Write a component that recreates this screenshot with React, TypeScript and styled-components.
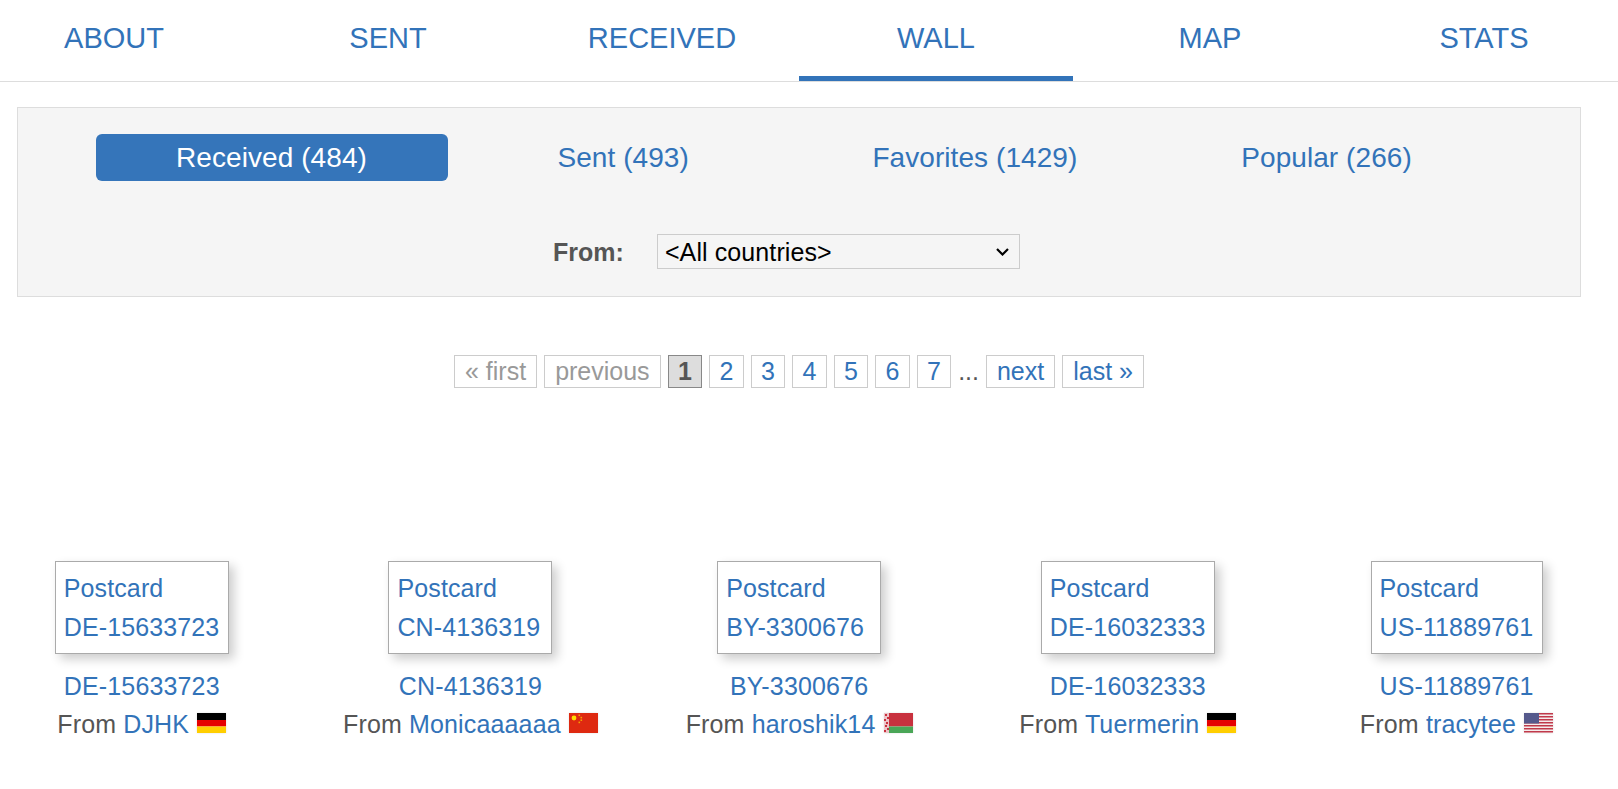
import { ReactNode } from 'react'
import styled, { createGlobalStyle } from 'styled-components'

const BLUE = '#3273b9'

const GlobalStyle = createGlobalStyle`
  html, body {
    margin: 0;
    padding: 0;
    background: #fff;
    overflow: hidden;
  }

  body {
    font-family: "Liberation Sans", Arial, sans-serif;
    font-size: 25px;
    color: #555;
  }

  a {
    color: ${BLUE};
    text-decoration: none;
  }
`

const Page = styled.div`
  width: 1618px;
  height: 789px;
  overflow: hidden;
`

const TabBarWrap = styled.nav`
  border-bottom: 1px solid #ddd;
`

const TabBar = styled.div`
  display: flex;
  margin-left: -23px;
  width: 1644px;
`

const Tab = styled.a<{ $active?: boolean }>`
  flex: 0 0 274px;
  height: 76px;
  border-bottom: 5px solid ${(p) => (p.$active ? BLUE : 'transparent')};
  display: flex;
  align-items: center;
  justify-content: center;
  font-size: 29px;
`

const FilterPanel = styled.section`
  margin: 25px 37px 0 17px;
  height: 190px;
  box-sizing: border-box;
  background: #f5f5f5;
  border: 1px solid #ddd;
  padding: 26px 77.5px;
`

const FilterTabs = styled.div`
  display: grid;
  grid-template-columns: repeat(4, 351.7px);
`

const FilterTab = styled.a<{ $active?: boolean }>`
  height: 47px;
  box-sizing: border-box;
  width: 352px;
  display: flex;
  align-items: center;
  justify-content: center;
  font-size: 28px;
  letter-spacing: 0.07px;
  border-radius: 6px;
  background: ${(p) => (p.$active ? '#3575ba' : 'transparent')};
  color: ${(p) => (p.$active ? '#fff' : BLUE)};
`

const CountryRow = styled.div`
  margin-top: 53px;
  display: flex;
  align-items: center;
  justify-content: center;
  gap: 33px;
  padding-right: 25px;
`

const CountryLabel = styled.label`
  font-weight: 700;
  color: #555;
  padding-top: 1px;
`

const SelectWrap = styled.div`
  position: relative;
  width: 363px;
  height: 35px;
`

const CountrySelect = styled.select`
  appearance: none;
  display: block;
  width: 100%;
  height: 100%;
  box-sizing: border-box;
  padding: 0 30px 0 7px;
  font-family: "Liberation Sans", Arial, sans-serif;
  font-size: 25px;
  letter-spacing: 0.1px;
  color: #000;
  background: #f5f5f5;
  border: 1px solid #ccc;
  border-radius: 0;
`

const SelectArrow = styled.svg`
  position: absolute;
  right: 11px;
  top: 14px;
  width: 13px;
  height: 8px;
  pointer-events: none;
`

const Pagination = styled.div`
  margin-top: 58px;
  padding-right: 20px;
  display: flex;
  justify-content: center;
  align-items: center;
  gap: 7px;
`

const PageItem = styled.a<{ $state?: 'current' | 'disabled'; $digit?: boolean }>`
  height: 33px;
  box-sizing: border-box;
  line-height: 30px;
  padding: 0 ${(p) => (p.$digit ? '9.3px' : '10px')};
  border: 1px solid ${(p) => (p.$state === 'current' ? '#888' : '#ccc')};
  background: ${(p) => (p.$state === 'current' ? '#ddd' : '#fff')};
  font-weight: ${(p) => (p.$state === 'current' ? 700 : 400)};
  color: ${(p) =>
    p.$state === 'current' ? '#555' : p.$state === 'disabled' ? '#999' : BLUE};
`

const Ellipsis = styled.span`
  color: #555;
`

const Gallery = styled.div`
  margin: 173px 0 0 -22.6px;
  width: 1645px;
  display: grid;
  grid-template-columns: repeat(5, 328.7px);
`

const Item = styled.div`
  display: flex;
  flex-direction: column;
  align-items: center;
`

const Card = styled.a<{ $width: number }>`
  width: ${(p) => p.$width}px;
  height: 93px;
  box-sizing: border-box;
  padding: 6.5px 8px;
  border: 1px solid #aaa;
  background: #fff;
  box-shadow: 5px 5px 10px rgba(0, 0, 0, 0.2);
  line-height: 39px;
  letter-spacing: 0.12px;
`

const Caption = styled.div`
  margin-top: 13px;
  text-align: center;
  line-height: 38px;
  white-space: nowrap;
  letter-spacing: 0.15px;
`

const FlagBox = styled.svg`
  display: inline-block;
  width: 29px;
  height: 20px;
  vertical-align: 0;
  margin-left: 1px;
  box-shadow: 0 0 2px rgba(0, 0, 0, 0.12);
`

const Flag = ({ children }: { children: ReactNode }) => (
  <FlagBox viewBox="0 0 29 20" preserveAspectRatio="none">
    {children}
  </FlagBox>
)

const FlagDE = () => (
  <Flag>
    <rect width="29" height="7" fill="#000" />
    <rect y="7" width="29" height="6.5" fill="#e60000" />
    <rect y="13.5" width="29" height="6.5" fill="#ffce00" />
  </Flag>
)

const FlagCN = () => (
  <Flag>
    <rect width="29" height="20" fill="#de2910" />
    <circle cx="5" cy="5" r="2.4" fill="#ffde00" />
    <rect x="9.5" y="1.5" width="1.6" height="1.6" fill="#f5a000" />
    <rect x="11.5" y="3.8" width="1.6" height="1.6" fill="#f5a000" />
    <rect x="11.5" y="6.4" width="1.6" height="1.6" fill="#f5a000" />
    <rect x="9.5" y="8.6" width="1.6" height="1.6" fill="#f5a000" />
  </Flag>
)

const FlagBY = () => (
  <Flag>
    <rect width="29" height="13.5" fill="#c8313e" />
    <rect y="13.5" width="29" height="6.5" fill="#4aa657" />
    <rect width="5" height="20" fill="#ecc4c8" />
    <path d="M1 1h2v2H1zM3 4h2v2H3zM0 6h2v2H0zM2 9h2v2H2zM1 12h2v2H1zM3 15h2v2H3zM0 17h2v2H0z" fill="#c8313e" />
  </Flag>
)

const FlagUS = () => (
  <Flag>
    <rect width="29" height="20" fill="#f4ecec" />
    {[0, 3, 6, 9, 12, 15, 18].map((y) => (
      <rect key={y} y={y} width="29" height="1.5" fill="#c0394a" />
    ))}
    <rect width="15" height="10.5" fill="#55598c" />
  </Flag>
)

const tabs = ['ABOUT', 'SENT', 'RECEIVED', 'WALL', 'MAP', 'STATS']

const filters = ['Received (484)', 'Sent (493)', 'Favorites (1429)', 'Popular (266)']

const pages = ['2', '3', '4', '5', '6', '7']

const postcards = [
  { id: 'DE-15633723', user: 'DJHK', width: 174, flag: <FlagDE /> },
  { id: 'CN-4136319', user: 'Monicaaaaaa', width: 164, flag: <FlagCN /> },
  { id: 'BY-3300676', user: 'haroshik14', width: 164, flag: <FlagBY /> },
  { id: 'DE-16032333', user: 'Tuermerin', width: 174, flag: <FlagDE /> },
  { id: 'US-11889761', user: 'tracytee', width: 172, flag: <FlagUS /> },
]

const App = () => (
  <Page>
    <GlobalStyle />
    <TabBarWrap>
      <TabBar>
        {tabs.map((t) => (
          <Tab key={t} href="#" $active={t === 'WALL'}>
            {t}
          </Tab>
        ))}
      </TabBar>
    </TabBarWrap>

    <FilterPanel>
      <FilterTabs>
        {filters.map((f, i) => (
          <FilterTab key={f} href="#" $active={i === 0}>
            {f}
          </FilterTab>
        ))}
      </FilterTabs>
      <CountryRow>
        <CountryLabel htmlFor="country">From:</CountryLabel>
        <SelectWrap>
          <CountrySelect id="country" defaultValue="all">
            <option value="all">&lt;All countries&gt;</option>
          </CountrySelect>
          <SelectArrow viewBox="0 0 13 8">
            <path d="M1 1 6.5 6.5 12 1" fill="none" stroke="#000" strokeWidth="2.2" />
          </SelectArrow>
        </SelectWrap>
      </CountryRow>
    </FilterPanel>

    <Pagination>
      <PageItem $state="disabled">« first</PageItem>
      <PageItem $state="disabled">previous</PageItem>
      <PageItem $state="current" $digit>
        1
      </PageItem>
      {pages.map((n) => (
        <PageItem key={n} href="#" $digit>
          {n}
        </PageItem>
      ))}
      <Ellipsis>...</Ellipsis>
      <PageItem href="#">next</PageItem>
      <PageItem href="#">last »</PageItem>
    </Pagination>

    <Gallery>
      {postcards.map((p) => (
        <Item key={p.id}>
          <Card href="#" $width={p.width}>
            Postcard
            <br />
            {p.id}
          </Card>
          <Caption>
            <a href="#">{p.id}</a>
            <br />
            From <a href="#">{p.user}</a> {p.flag}
          </Caption>
        </Item>
      ))}
    </Gallery>
  </Page>
)

export default App
